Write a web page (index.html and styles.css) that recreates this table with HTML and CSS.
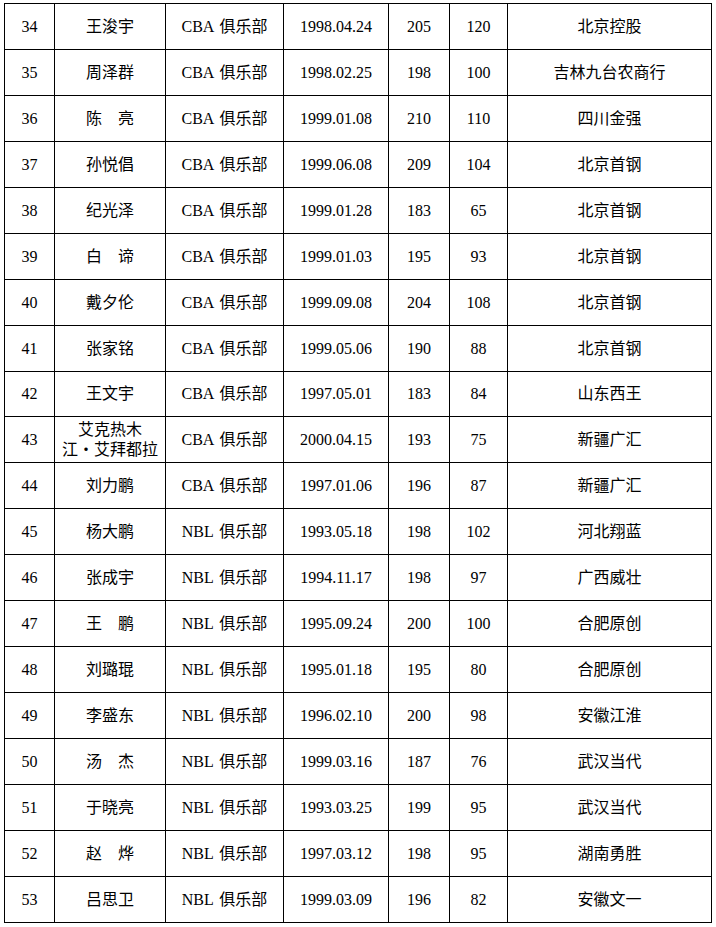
FILE: index.html
```html
<!DOCTYPE html>
<html lang="zh-CN">
<head>
<meta charset="utf-8">
<title>球员名单</title>
<link rel="stylesheet" href="styles.css">
</head>
<body>
<table class="roster">
  <colgroup>
    <col class="c-no"><col class="c-name"><col class="c-club"><col class="c-date"><col class="c-h"><col class="c-w"><col class="c-team">
  </colgroup>
  <tbody>
    <tr><td>34</td><td>王浚宇</td><td class="club">CBA 俱乐部</td><td>1998.04.24</td><td>205</td><td>120</td><td>北京控股</td></tr>
    <tr><td>35</td><td>周泽群</td><td class="club">CBA 俱乐部</td><td>1998.02.25</td><td>198</td><td>100</td><td>吉林九台农商行</td></tr>
    <tr><td>36</td><td>陈　亮</td><td class="club">CBA 俱乐部</td><td>1999.01.08</td><td>210</td><td>110</td><td>四川金强</td></tr>
    <tr><td>37</td><td>孙悦倡</td><td class="club">CBA 俱乐部</td><td>1999.06.08</td><td>209</td><td>104</td><td>北京首钢</td></tr>
    <tr><td>38</td><td>纪光泽</td><td class="club">CBA 俱乐部</td><td>1999.01.28</td><td>183</td><td>65</td><td>北京首钢</td></tr>
    <tr><td>39</td><td>白　谛</td><td class="club">CBA 俱乐部</td><td>1999.01.03</td><td>195</td><td>93</td><td>北京首钢</td></tr>
    <tr><td>40</td><td>戴夕伦</td><td class="club">CBA 俱乐部</td><td>1999.09.08</td><td>204</td><td>108</td><td>北京首钢</td></tr>
    <tr><td>41</td><td>张家铭</td><td class="club">CBA 俱乐部</td><td>1999.05.06</td><td>190</td><td>88</td><td>北京首钢</td></tr>
    <tr><td>42</td><td>王文宇</td><td class="club">CBA 俱乐部</td><td>1997.05.01</td><td>183</td><td>84</td><td>山东西王</td></tr>
    <tr><td>43</td><td class="two-line">艾克热木<br>江・艾拜都拉</td><td class="club">CBA 俱乐部</td><td>2000.04.15</td><td>193</td><td>75</td><td>新疆广汇</td></tr>
    <tr><td>44</td><td>刘力鹏</td><td class="club">CBA 俱乐部</td><td>1997.01.06</td><td>196</td><td>87</td><td>新疆广汇</td></tr>
    <tr><td>45</td><td>杨大鹏</td><td class="club">NBL 俱乐部</td><td>1993.05.18</td><td>198</td><td>102</td><td>河北翔蓝</td></tr>
    <tr><td>46</td><td>张成宇</td><td class="club">NBL 俱乐部</td><td>1994.11.17</td><td>198</td><td>97</td><td>广西威壮</td></tr>
    <tr><td>47</td><td>王　鹏</td><td class="club">NBL 俱乐部</td><td>1995.09.24</td><td>200</td><td>100</td><td>合肥原创</td></tr>
    <tr><td>48</td><td>刘璐琨</td><td class="club">NBL 俱乐部</td><td>1995.01.18</td><td>195</td><td>80</td><td>合肥原创</td></tr>
    <tr><td>49</td><td>李盛东</td><td class="club">NBL 俱乐部</td><td>1996.02.10</td><td>200</td><td>98</td><td>安徽江淮</td></tr>
    <tr><td>50</td><td>汤　杰</td><td class="club">NBL 俱乐部</td><td>1999.03.16</td><td>187</td><td>76</td><td>武汉当代</td></tr>
    <tr><td>51</td><td>于晓亮</td><td class="club">NBL 俱乐部</td><td>1993.03.25</td><td>199</td><td>95</td><td>武汉当代</td></tr>
    <tr><td>52</td><td>赵　烨</td><td class="club">NBL 俱乐部</td><td>1997.03.12</td><td>198</td><td>95</td><td>湖南勇胜</td></tr>
    <tr><td>53</td><td>吕思卫</td><td class="club">NBL 俱乐部</td><td>1999.03.09</td><td>196</td><td>82</td><td>安徽文一</td></tr>
  </tbody>
</table>
</body>
</html>
```
FILE: styles.css
```css
html, body {
  margin: 0;
  padding: 0;
  background: #ffffff;
}

body {
  padding: 3px 0 0 4px;
  font-family: "Liberation Serif", "Noto Sans CJK SC", serif;
  font-size: 16px;
  color: #000000;
}

.roster {
  border-collapse: collapse;
  table-layout: fixed;
  width: 708px;
}

.c-no { width: 50px; }
.c-name { width: 111px; }
.c-club { width: 118px; }
.c-date { width: 105px; }
.c-h { width: 61px; }
.c-w { width: 58px; }
.c-team { width: 204px; }

.roster tr {
  height: 45.95px;
}

.roster td {
  border: 1px solid #000000;
  padding: 1px 0 0 0;
  text-align: center;
  vertical-align: middle;
  line-height: 20px;
  white-space: nowrap;
}

.roster td.club {
  word-spacing: 2px;
}

.roster td.two-line {
  line-height: 20px;
}
```
